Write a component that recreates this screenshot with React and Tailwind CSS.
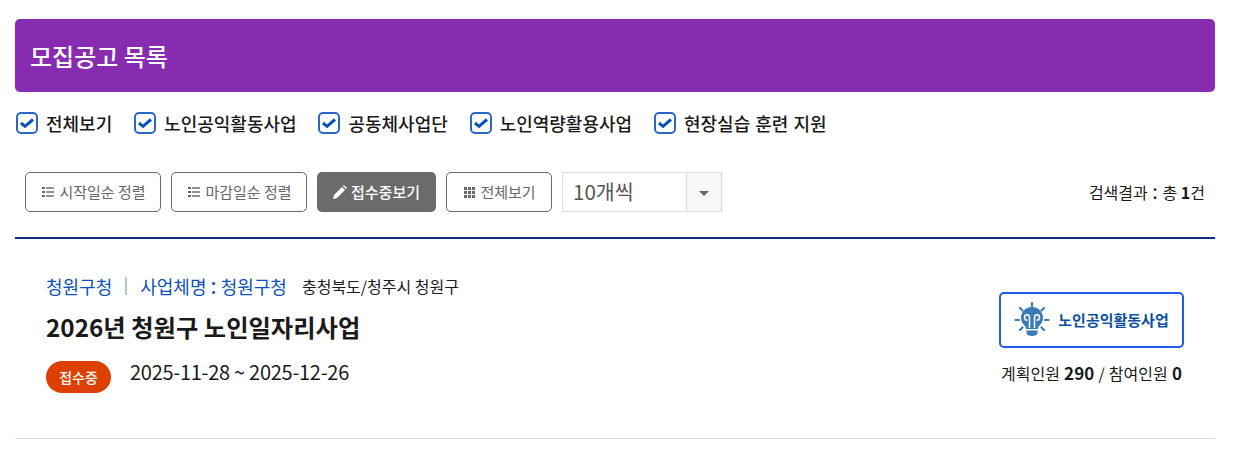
import React from "react";

const font = "font-['Noto_Sans_CJK_KR','Noto_Sans',sans-serif]";

const categories = ["전체보기", "노인공익활동사업", "공동체사업단", "노인역량활용사업", "현장실습 훈련 지원"];

function Check({ label }) {
  return (
    <label className="flex items-center gap-[8px]">
      <span className="w-[22px] h-[22px] rounded-[5px] border-2 border-[#2a67c6] flex items-center justify-center bg-white">
        <svg width="14" height="10" viewBox="0 0 14 10" fill="none">
          <path d="M1 5 L5 8.300 L13 1.500" stroke="#0b50b8" strokeWidth="3" />
        </svg>
      </span>
      <span className="text-[18px] leading-[22px] font-medium text-[#1a1a1a] [word-spacing:1px]">{label}</span>
    </label>
  );
}

function ListIcon() {
  return (
    <svg width="12" height="10" viewBox="0 0 12 10" fill="#666">
      <rect x="0" y="0" width="3" height="2" />
      <rect x="0" y="4" width="3" height="2" />
      <rect x="0" y="8" width="3" height="2" />
      <rect x="4" y="0.3" width="8" height="1.4" />
      <rect x="4" y="4.3" width="8" height="1.4" />
      <rect x="4" y="8.3" width="8" height="1.4" />
    </svg>
  );
}

function GridIcon() {
  return (
    <svg width="11" height="11" viewBox="0 0 11 11" fill="#666">
      {[0, 4, 8].map((y) =>
        [0, 4, 8].map((x) => <rect key={x + "-" + y} x={x} y={y} width="3" height="3" />)
      )}
    </svg>
  );
}

function PencilIcon() {
  return (
    <svg width="14" height="14" viewBox="0 0 14 14" fill="#fff">
      <path d="M0 14 L1 10 L9 2 L12 5 L4 13 Z" />
      <path d="M10 1 L11 0 L14 3 L13 4 Z" />
    </svg>
  );
}

function SortButton({ children, className }) {
  return (
    <button className={"h-[40px] rounded-[5px] border border-[#6b6b6b] bg-white text-[#666] text-[15px] flex items-center justify-center gap-[5px] " + className}>
      {children}
    </button>
  );
}

function BulbIcon() {
  return (
    <svg width="36" height="36" viewBox="0 0 36 36" fill="none">
      <g stroke="#3a7ab5" strokeWidth="2.200" strokeLinecap="round">
        <path d="M18 1v3" />
        <path d="M6 6l2.500 2.500" />
        <path d="M30 6l-2.500 2.500" />
        <path d="M1.500 18h3.500" />
        <path d="M31 18h3.500" />
        <path d="M6 28l2.500-2.500" />
        <path d="M30 28l-2.500-2.500" />
      </g>
      <path d="M18 5c-6 0-11 4.700-11 10.800 0 3.600 1.700 5.800 3.500 7.700 1 1 1.500 2 1.500 3.500h12c0-1.500.5-2.500 1.500-3.500 1.800-1.900 3.500-4.100 3.500-7.700C29 9.700 24 5 18 5z" fill="#3a7ab5" />
      <path d="M12.500 28.500h11v2.500c0 1.500-2 3-5.500 3s-5.500-1.500-5.500-3z" fill="#3a7ab5" />
      <path d="M15.500 26V15.500c0-3.600-5-3.600-5 0 0 1.800 1.500 2.800 3 2.800M20.500 26V15.500c0-3.600 5-3.600 5 0 0 1.800-1.500 2.800-3 2.800" stroke="#fff" strokeWidth="1.500" />
    </svg>
  );
}

export default function App() {
  return (
    <div className={"bg-white w-[1234px] h-[474px] overflow-hidden pl-[15px] pr-[19px] pt-[19px] " + font}>
      <div className="h-[73px] rounded-[5px] bg-[#872bb0] flex items-center px-[15px]">
        <h2 className="text-[24px] font-medium text-white">모집공고 목록</h2>
      </div>

      <div className="flex items-center gap-[21.850px] mt-[20px] pl-[1px]">
        {categories.map((c) => (
          <Check key={c} label={c} />
        ))}
      </div>

      <div className="flex items-center gap-[10px] mt-[38px] pl-[10px] pr-[10px]">
        <SortButton className="w-[136px] pl-[2px]">
          <ListIcon />
          시작일순 정렬
        </SortButton>
        <SortButton className="w-[136px] pl-[2px]">
          <ListIcon />
          마감일순 정렬
        </SortButton>
        <button className="w-[119px] h-[40px] rounded-[5px] bg-[#6b6b6b] text-white text-[15px] font-medium flex items-center justify-center gap-[4px]">
          <PencilIcon />
          접수중보기
        </button>
        <SortButton className="w-[106px] pl-[2px]">
          <GridIcon />
          전체보기
        </SortButton>
        <div className="w-[160px] h-[40px] border border-[#dcdcdc] flex">
          <span className="flex-1 pl-[10px] text-[20.600px] leading-[36px] text-[#555]">10개씩</span>
          <span className="w-[35px] bg-[#f7f7f7] border-l border-[#dcdcdc] flex items-center justify-center">
            <span className="w-0 h-0 border-x-[5px] border-x-transparent border-t-[5px] border-t-[#666] mt-[2px]"></span>
          </span>
        </div>
        <p className="ml-auto text-[16px] text-[#1a1a1a]">
          검색결과 <span className="text-[20px] leading-none mx-[1px]">:</span> 총 <b>1</b>건
        </p>
      </div>

      <div className="mt-[25px] border-t-2 border-b border-t-[#0b2f80] border-b-[#dddddd] h-[202px] flex items-start justify-between pl-[31px] pr-[31px] pt-[34px]">
        <div>
          <div className="flex items-center h-[26px] text-[18px] text-[#0b50b8]">
            <span>청원구청</span>
            <span className="w-[2px] h-[18px] bg-[#a8c8e8] mx-[13px]"></span>
            <span>
              사업체명 <span className="text-[22px] leading-none">:</span> 청원구청
            </span>
            <span className="ml-[15px] text-[16px] text-[#1a1a1a]">충청북도/청주시 청원구</span>
          </div>
          <h3 className="mt-[10px] text-[24.300px] leading-[36px] font-bold text-[#1a1a1a]">2026년 청원구 노인일자리사업</h3>
          <div className="flex items-start mt-[16px]">
            <span className="w-[65px] h-[32px] rounded-full bg-[#dd3f00] text-white text-[14px] font-medium flex items-center justify-center">접수중</span>
            <span className="ml-[19px] text-[20px] leading-[22px] tracking-[-0.280px] text-[#1a1a1a]">2025-11-28 ~ 2025-12-26</span>
          </div>
        </div>
        <div className="flex flex-col items-center pt-[19px]">
          <div className="w-[185px] h-[56px] rounded-[5px] border-2 border-[#1d5bf0] flex items-center justify-center gap-[8px]">
            <BulbIcon />
            <span className="text-[15px] font-bold text-[#0b50a0]">노인공익활동사업</span>
          </div>
          <p className="mt-[12px] text-[16px] text-[#1a1a1a] [word-spacing:0.600px]">
            계획인원 <b className="text-[17px]">290</b> / 참여인원 <b className="text-[17px]">0</b>
          </p>
        </div>
      </div>
    </div>
  );
}
